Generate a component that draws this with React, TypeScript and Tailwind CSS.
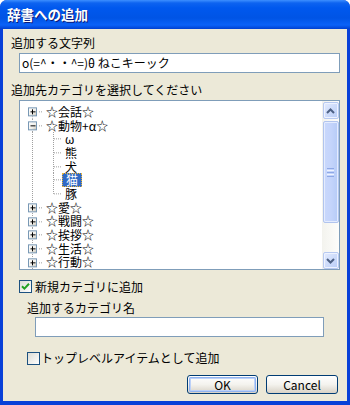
import React from "react";

const FONT = "font-['Noto_Sans_CJK_JP','Liberation_Sans',sans-serif]";
const RH = 13.7;

function Box({ open }: { open: boolean }) {
  return (
    <g>
      <rect x={8.5} y={RH / 2 - 4} width={8} height={8} fill="url(#bx)" stroke="#7898b5" strokeWidth={1} />
      <line x1={10.5} x2={15.5} y1={RH / 2} y2={RH / 2} stroke="#000" strokeWidth={1} />
      {!open && <line x1={12.5} x2={12.5} y1={RH / 2 - 2.5} y2={RH / 2 + 2.5} stroke="#000" strokeWidth={1} />}
    </g>
  );
}

function RootGutter({ open, first }: { open: boolean; first?: boolean }) {
  return (
    <svg width={26} height={RH} className="shrink-0">
      <defs>
        <linearGradient id="bx" x1="0" y1="0" x2="1" y2="1">
          <stop offset="0" stopColor="#ffffff" />
          <stop offset="0.6" stopColor="#f0efea" />
          <stop offset="1" stopColor="#c6c1b3" />
        </linearGradient>
      </defs>
      <line x1={12.5} x2={12.5} y1={first ? RH / 2 : 0} y2={RH} stroke="#a0a0a0" strokeDasharray="1 1" />
      <line x1={17} x2={23} y1={RH / 2} y2={RH / 2} stroke="#a0a0a0" strokeDasharray="1 1" />
      <rect x={8} y={RH / 2 - 4.5} width={10} height={9} fill="#fff" />
      <Box open={open} />
    </svg>
  );
}

function ChildGutter({ last }: { last?: boolean }) {
  return (
    <>
      <svg width={26} height={RH} className="shrink-0">
        <line x1={12.5} x2={12.5} y1={0} y2={RH} stroke="#a0a0a0" strokeDasharray="1 1" />
      </svg>
      <svg width={17} height={RH} className="shrink-0">
        <line x1={7.5} x2={7.5} y1={0} y2={last ? RH / 2 : RH} stroke="#a0a0a0" strokeDasharray="1 1" />
        <line x1={8} x2={15} y1={RH / 2} y2={RH / 2} stroke="#a0a0a0" strokeDasharray="1 1" />
      </svg>
    </>
  );
}

function RootRow({ text, open, first }: { text: string; open?: boolean; first?: boolean }) {
  return (
    <div className="flex items-center h-[13.7px] shrink-0">
      <RootGutter open={!!open} first={first} />
      <span className="text-[12px] leading-none text-black whitespace-nowrap">{text}</span>
    </div>
  );
}

function ChildRow({ text, selected, last }: { text: string; selected?: boolean; last?: boolean }) {
  return (
    <div className="flex items-center h-[13.7px] shrink-0">
      <ChildGutter last={last} />
      {selected ? (
        <span className="flex items-center h-[14px] ml-[-1px] px-[3px] bg-[#316ac5] text-white text-[12px] leading-none border border-dotted border-[#e8b438]">
          {text}
        </span>
      ) : (
        <span className="ml-[2px] text-[12px] leading-none text-black">{text}</span>
      )}
    </div>
  );
}

function Arrow({ up }: { up: boolean }) {
  return (
    <svg width={9} height={6} viewBox="0 0 9 6">
      <path
        d={up ? "M1 5 L4.5 1.5 L8 5" : "M1 1 L4.5 4.5 L8 1"}
        fill="none"
        stroke="#4d6185"
        strokeWidth={2}
      />
    </svg>
  );
}

function ScrollBtn({ up }: { up: boolean }) {
  return (
    <div className="h-[17px] w-[16px] rounded-[2px] border border-[#b7c9f1] bg-gradient-to-br from-[#e3ebfe] to-[#b9cdf7] flex items-center justify-center shadow-[inset_0_0_0_1px_#eef3ff]">
      <Arrow up={up} />
    </div>
  );
}

function Scrollbar() {
  return (
    <div className="w-[17px] h-full flex flex-col items-center bg-gradient-to-r from-[#f3f3ee] to-[#fdfdfb] pt-[1px]">
      <ScrollBtn up />
      <div className="mt-[2px] h-[102px] w-[16px] rounded-[2px] border border-[#b1c4ee] bg-gradient-to-r from-[#c9d8fc] via-[#c4d4fb] to-[#b6cbf7] flex flex-col items-center justify-center gap-[1px] shadow-[inset_0_0_0_1px_#e4ecfe]">
        <div className="w-[7px] h-[1px] bg-[#8ea8e6]" />
        <div className="w-[7px] h-[1px] bg-[#eef3ff]" />
        <div className="w-[7px] h-[1px] bg-[#8ea8e6]" />
        <div className="w-[7px] h-[1px] bg-[#eef3ff]" />
        <div className="w-[7px] h-[1px] bg-[#8ea8e6]" />
      </div>
      <div className="flex-1" />
      <ScrollBtn up={false} />
    </div>
  );
}

function CheckBox({ checked }: { checked: boolean }) {
  return (
    <div className="w-[13px] h-[13px] border border-[#1c5180] bg-gradient-to-br from-[#dcdcd5] to-[#ffffff] flex items-center justify-center shrink-0">
      {checked && (
        <svg width={9} height={9} viewBox="0 0 9 9">
          <path d="M1 4.2 L3.4 6.6 L8 1.8" fill="none" stroke="#21a121" strokeWidth={2} />
        </svg>
      )}
    </div>
  );
}

function Button({ label, def }: { label: string; def?: boolean }) {
  return (
    <div className="h-[19px] rounded-[3px] border border-[#003c74] bg-gradient-to-b from-[#ffffff] via-[#f4f3ee] to-[#d8d2c6] flex items-center justify-center p-[1px]">
      <div
        className={
          def
            ? "w-full h-full rounded-[2px] shadow-[inset_0_0_0_1px_#91b3f0,inset_0_0_0_2px_#bcd1f8] flex items-center justify-center"
            : "w-full h-full flex items-center justify-center"
        }
      >
        <span className="text-[12px] leading-none text-black">{label}</span>
      </div>
    </div>
  );
}

export default function App() {
  return (
    <div className={`${FONT} w-[350px] h-[405px] flex flex-col bg-[#0840d8] rounded-t-[7px] overflow-hidden`}>
      <div className="h-[29px] shrink-0 flex items-center pl-[7px] bg-[linear-gradient(to_bottom,#3d8fff_0px,#0d63f0_3px,#0058ee_8px,#0054e5_18px,#0a62f8_25px,#0040d0_29px)]">
        <span className="text-[13.5px] font-bold text-white leading-none [text-shadow:1px_1px_0_#0a1a7a]">辞書への追加</span>
      </div>
      <div className="flex-1 mx-[3px] mb-[4px] bg-[#ece9d8] flex flex-col">
        <div className="mt-[7px] ml-[8px] h-[14px] flex items-center text-[12px] leading-none text-black">追加する文字列</div>
        <div className="mt-[3px] ml-[16px] w-[321px] h-[20px] border border-[#7f9db9] bg-white flex items-center pl-[2px] text-[12px] leading-none text-black whitespace-nowrap">
          o(=^・・^=)θ ねこキーック
        </div>
        <div className="mt-[10px] ml-[8px] h-[14px] flex items-center text-[12px] leading-none text-black">追加先カテゴリを選択してください</div>
        <div className="mt-[3px] ml-[16px] w-[321px] h-[170px] border border-[#7f9db9] bg-white flex">
          <div className="flex-1 overflow-hidden flex flex-col pt-[4px]">
            <RootRow text="☆会話☆" first />
            <RootRow text="☆動物+α☆" open />
            <ChildRow text="ω" />
            <ChildRow text="熊" />
            <ChildRow text="犬" />
            <ChildRow text="猫" selected />
            <ChildRow text="豚" last />
            <RootRow text="☆愛☆" />
            <RootRow text="☆戦闘☆" />
            <RootRow text="☆挨拶☆" />
            <RootRow text="☆生活☆" />
            <RootRow text="☆行動☆" />
          </div>
          <Scrollbar />
        </div>
        <div className="mt-[9px] ml-[16px] h-[15px] flex items-center gap-[3px]">
          <CheckBox checked />
          <span className="text-[12px] leading-none text-black">新規カテゴリに追加</span>
        </div>
        <div className="mt-[7px] ml-[24px] h-[14px] flex items-center text-[12px] leading-none text-black">追加するカテゴリ名</div>
        <div className="mt-[2px] ml-[32px] w-[289px] h-[20px] border border-[#7f9db9] bg-white" />
        <div className="mt-[14px] ml-[24px] h-[14px] flex items-center gap-[1px]">
          <CheckBox checked={false} />
          <span className="text-[12px] leading-none text-black">トップレベルアイテムとして追加</span>
        </div>
        <div className="mt-[10px] ml-[184px] flex gap-[8px]">
          <div className="w-[71px]">
            <Button label="OK" def />
          </div>
          <div className="w-[72px]">
            <Button label="Cancel" />
          </div>
        </div>
      </div>
    </div>
  );
}
